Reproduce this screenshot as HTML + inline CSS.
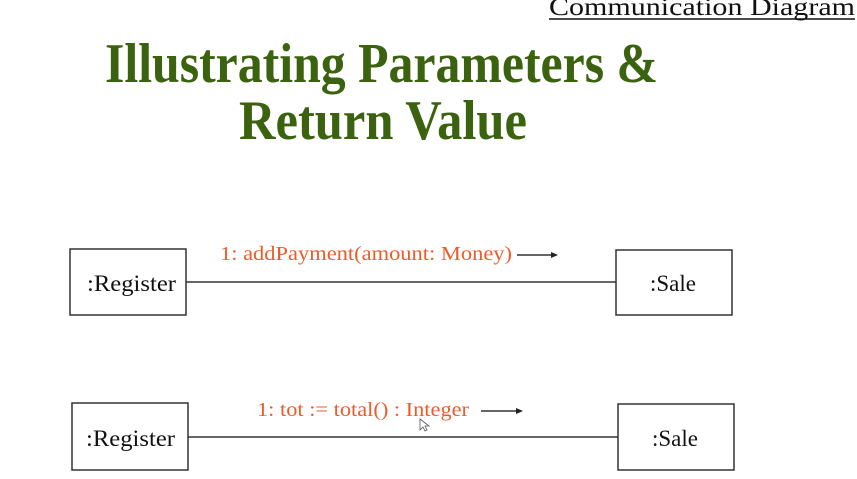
<!DOCTYPE html>
<html><head><style>body{margin:0;background:#fff;}svg{display:block}</style></head>
<body>
<svg width="857" height="479" viewBox="0 0 857 479" xmlns="http://www.w3.org/2000/svg">
<rect width="857" height="479" fill="#fff"/>
<text x="549" y="15" font-family="Liberation Serif, serif" font-size="25" fill="#111" textLength="306" lengthAdjust="spacingAndGlyphs">Communication Diagram</text>
<line x1="549" y1="19" x2="855" y2="19" stroke="#111" stroke-width="1.5"/>
<g font-family="Liberation Serif, serif" font-weight="bold" font-size="56" fill="#3b620e">
<text x="105" y="82" textLength="553" lengthAdjust="spacingAndGlyphs">Illustrating Parameters &amp;</text>
<text x="239" y="139" textLength="288" lengthAdjust="spacingAndGlyphs">Return Value</text>
</g>
<g stroke="#333" stroke-width="1.5" fill="none">
<rect x="70" y="249" width="116" height="66"/>
<rect x="616" y="250" width="116" height="65"/>
<line x1="186" y1="282" x2="616" y2="282"/>
<rect x="72" y="403" width="116" height="67"/>
<rect x="618" y="404" width="116" height="66"/>
<line x1="188" y1="437" x2="618" y2="437"/>
<line x1="517" y1="255" x2="552" y2="255"/>
<line x1="481" y1="411" x2="517" y2="411"/>
</g>
<polygon points="551,252 558,255 551,258" fill="#222"/>
<polygon points="516,408 523,411 516,414" fill="#222"/>
<g font-family="Liberation Serif, serif" font-size="23" fill="#111">
<text x="87" y="291" textLength="89" lengthAdjust="spacingAndGlyphs">:Register</text>
<text x="650" y="291">:Sale</text>
<text x="86" y="446" textLength="89" lengthAdjust="spacingAndGlyphs">:Register</text>
<text x="652" y="446">:Sale</text>
</g>
<g font-family="Liberation Serif, serif" font-size="20" fill="#f05a28">
<text x="220" y="260" textLength="292" lengthAdjust="spacingAndGlyphs">1: addPayment(amount: Money)</text>
<text x="257" y="416" textLength="212" lengthAdjust="spacingAndGlyphs">1: tot := total() : Integer</text>
</g>
<path d="M420 419 L420 430 L423 427 L425 431 L427 430 L425 426 L429 426 Z" fill="#fff" stroke="#555" stroke-width="0.8"/>
</svg>
</body></html>
